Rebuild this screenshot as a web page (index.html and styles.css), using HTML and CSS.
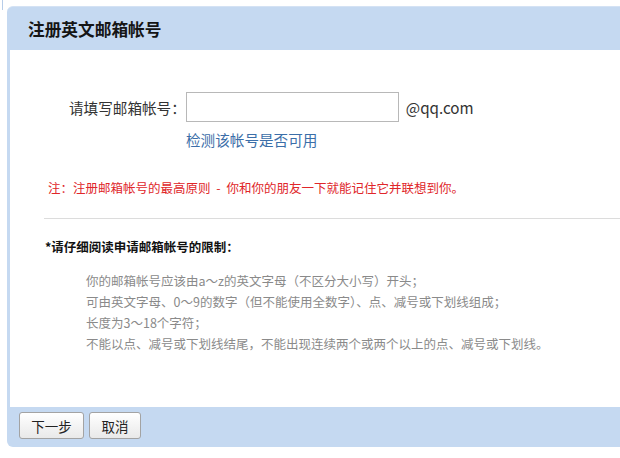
FILE: index.html
```html
<!DOCTYPE html>
<html lang="zh-CN">
<head>
<meta charset="utf-8">
<title>注册英文邮箱帐号</title>
<link rel="stylesheet" href="styles.css">
</head>
<body>
<div class="page">
  <div class="tick"></div>
  <div class="panel">
    <div class="panel-head">
      <h1 class="panel-title">注册英文邮箱帐号</h1>
    </div>
    <div class="panel-body">
      <div class="form-row">
        <label class="form-label" for="mail">请填写邮箱帐号：</label>
        <input class="form-input" id="mail" type="text">
        <span class="form-suffix">@qq.com</span>
      </div>
      <div class="check-row"><a class="check-link" href="#">检测该帐号是否可用</a></div>
      <p class="note">注：注册邮箱帐号的最高原则 - 你和你的朋友一下就能记住它并联想到你。</p>
      <div class="divider"></div>
      <p class="rules-title">*请仔细阅读申请邮箱帐号的限制：</p>
      <ul class="rules">
        <li>你的邮箱帐号应该由a～z的英文字母（不区分大小写）开头；</li>
        <li>可由英文字母、0～9的数字（但不能使用全数字）、点、减号或下划线组成；</li>
        <li>长度为3～18个字符；</li>
        <li>不能以点、减号或下划线结尾，不能出现连续两个或两个以上的点、减号或下划线。</li>
      </ul>
    </div>
    <div class="panel-foot">
      <button class="btn btn-next" type="button">下一步</button>
      <button class="btn btn-cancel" type="button">取消</button>
    </div>
  </div>
</div>
</body>
</html>
```
FILE: styles.css
```css
* { box-sizing: border-box; }
html, body {
  margin: 0;
  padding: 0;
  background: #fff;
}
body {
  font-family: "Noto Sans CJK SC", "Microsoft YaHei", sans-serif;
  color: #333;
}
.page {
  display: flex;
  align-items: flex-start;
  width: 620px;
}
.tick {
  width: 1px;
  height: 10px;
  margin-left: 2px;
  background: #b7cde9;
  flex: none;
}
.panel {
  margin-left: 4px;
  margin-top: 6px;
  flex: 1;
  min-width: 0;
}
.panel-head {
  height: 44px;
  background: #c5d9f1;
  border-top: 1px solid #d4e2f4;
  border-radius: 6px 0 0 0;
  display: flex;
  align-items: center;
  padding-left: 21px;
}
.panel-title {
  margin: 0;
  font-size: 16.7px;
  font-weight: bold;
  color: #151515;
  line-height: 20px;
}
.panel-body {
  height: 357px;
  background: #fff;
  border-left: 3px solid #c5d9f1;
  padding-top: 42px;
}
.form-row {
  display: flex;
  align-items: center;
  padding-left: 59px;
  height: 30px;
}
.form-label {
  font-size: 14.6px;
  color: #333;
  white-space: nowrap;
}
.form-input {
  width: 213px;
  height: 30px;
  border: 1px solid #b8b8b8;
  margin: 0;
  padding: 0 4px;
  font: inherit;
  background: #fff;
}
.form-suffix {
  margin-left: 7px;
  font-size: 15.2px;
  color: #333;
}
.check-row {
  margin-top: 7px;
  padding-left: 176px;
  line-height: 20px;
}
.check-link {
  font-size: 14.6px;
  color: #3b6ea8;
  text-decoration: none;
}
.note {
  margin: 28px 0 0 0;
  padding-left: 38px;
  font-size: 12.5px;
  line-height: 20px;
  color: #e0262a;
  word-spacing: 3px;
}
.divider {
  margin: 20px 0 0 34px;
  height: 1px;
  background: #dcdcdc;
}
.rules-title {
  margin: 18px 0 0 0;
  padding-left: 35px;
  font-size: 12.5px;
  line-height: 20px;
  font-weight: bold;
  color: #111;
}
.rules {
  list-style: none;
  margin: 13px 0 0 0;
  padding: 0 0 0 76px;
}
.rules li {
  font-size: 12.5px;
  line-height: 21px;
  color: #8a8a8a;
  white-space: nowrap;
}
.panel-foot {
  height: 40px;
  background: #c5d9f1;
  border-radius: 0 0 0 6px;
  display: flex;
  align-items: flex-start;
  gap: 5px;
  padding: 5px 0 0 12px;
}
.btn {
  height: 27px;
  margin: 0;
  padding: 0;
  border: 1px solid #a3a3a3;
  border-radius: 3px;
  background: linear-gradient(#ffffff, #e9e9e9);
  font-family: "Noto Sans CJK SC", sans-serif;
  font-size: 13.5px;
  color: #222;
}
.btn-next { width: 65px; }
.btn-cancel { width: 52px; }
```
